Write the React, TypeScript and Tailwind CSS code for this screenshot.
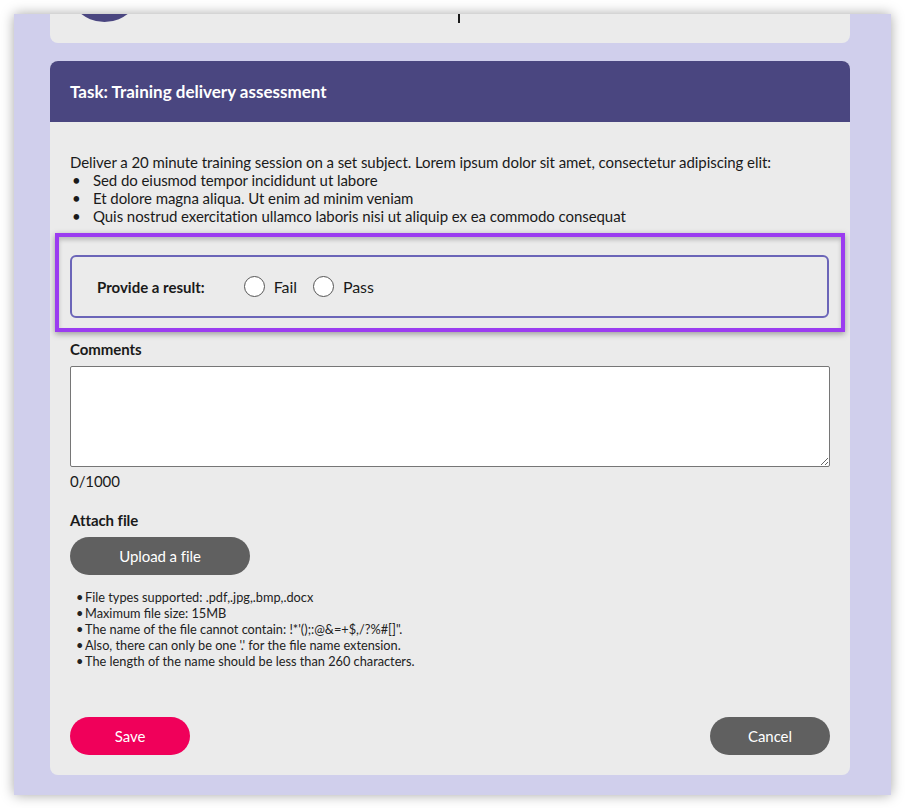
import React from "react";

const Radio = ({ label }: { label: string }) => (
  <label className="flex items-center gap-[9px] text-[16px]">
    <span className="w-[21px] h-[21px] rounded-full border-[1.5px] border-[#555] bg-white" />
    <span>{label}</span>
  </label>
);

export default function App() {
  const points = [
    "Sed do eiusmod tempor incididunt ut labore",
    "Et dolore magna aliqua. Ut enim ad minim veniam",
    "Quis nostrud exercitation ullamco laboris nisi ut aliquip ex ea commodo consequat",
  ];
  const rules = [
    "File types supported: .pdf,.jpg,.bmp,.docx",
    "Maximum file size: 15MB",
    "The name of the file cannot contain: !*'();:@&=+$,/?%#[]\".",
    "Also, there can only be one '.' for the file name extension.",
    "The length of the name should be less than 260 characters.",
  ];

  return (
    <div className="w-[905px] h-[808px] bg-white p-[14px] font-['Lato','Liberation_Sans',sans-serif] text-[#1a1a1a]">
      <div className="w-[877px] h-[781px] bg-[#d0cfec] shadow-[0_0_12px_rgba(0,0,0,0.35)] overflow-hidden pl-[36px] pr-[41px]">
        {/* top card, scrolled mostly out of view */}
        <div className="-mt-[101px] h-[130px] bg-[#ebebeb] rounded-lg relative">
          <div className="absolute left-[17px] top-[34px] w-[75px] h-[75px] rounded-full bg-[#4a4680]" />
          <div className="absolute left-[408px] top-[98px] w-[2px] h-[12px] bg-[#1a1a1a]" />
        </div>

        {/* task card */}
        <div className="mt-[18px] bg-[#ebebeb] rounded-lg overflow-hidden">
          <div className="h-[61px] bg-[#4a4680] flex items-center px-5">
            <h2 className="text-white font-bold text-[17px]">Task: Training delivery assessment</h2>
          </div>

          <div className="px-5 pt-[31px] pb-5 text-[15px] leading-[18px] tracking-[-0.07px]">
            <p>
              Deliver a 20 minute training session on a set subject. Lorem ipsum dolor sit amet, consectetur adipiscing elit:
            </p>
            <ul>
              {points.map((p) => (
                <li key={p} className="flex">
                  <span className="w-[23px] pl-[2px]">•</span>
                  <span>{p}</span>
                </li>
              ))}
            </ul>

            <div className="mt-2 -mx-[15px] border-4 border-[#9b3cf0] pt-[18px] pb-[10px] pl-[11px] pr-[12px] shadow-[0_2px_6px_rgba(0,0,0,0.35),inset_0_3px_4px_rgba(0,0,0,0.2)]">
              <div className="h-[63px] border-2 border-[#6b65b8] rounded-md flex items-center pl-[25px]">
                <span className="font-bold mr-[39px] tracking-normal">Provide a result:</span>
                <div className="flex items-center gap-[16px]">
                  <Radio label="Fail" />
                  <Radio label="Pass" />
                </div>
              </div>
            </div>

            <div className="mt-2 font-bold">Comments</div>
            <textarea className="mt-2 block w-full h-[101px] bg-white border border-[#767676] rounded-[2px]" />
            <div className="mt-[5px]">0/1000</div>

            <div className="mt-[21px] font-bold">Attach file</div>
            <button className="mt-2 w-[180px] h-[38px] rounded-full bg-[#606060] text-white text-[15px]">
              Upload a file
            </button>

            <ul className="mt-[14px] text-[12.75px] leading-[16px] tracking-normal text-[#222]">
              {rules.map((r) => (
                <li key={r} className="flex">
                  <span className="w-[15px] pl-[6px]">•</span>
                  <span>{r}</span>
                </li>
              ))}
            </ul>

            <div className="mt-12 flex justify-between">
              <button className="w-[120px] h-[38px] rounded-full bg-[#f0005a] text-white">Save</button>
              <button className="w-[120px] h-[38px] rounded-full bg-[#606060] text-white">Cancel</button>
            </div>
          </div>
        </div>
      </div>
    </div>
  );
}
